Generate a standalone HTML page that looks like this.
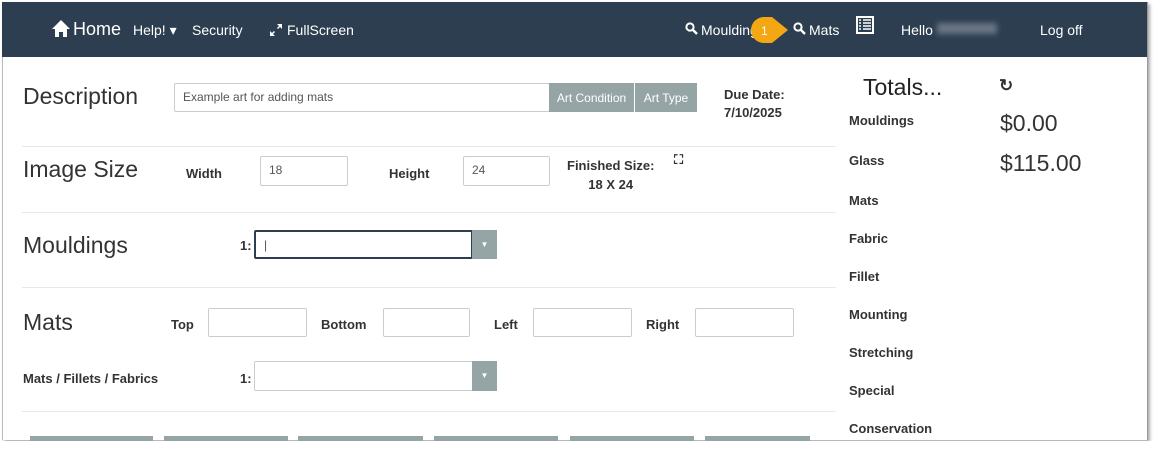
<!DOCTYPE html>
<html><head><style>
body{margin:0;width:1161px;height:457px;background:#fff;font-family:"Liberation Sans",sans-serif;position:relative;overflow:hidden;color:#222}
.a{position:absolute}
.page{left:2px;top:2px;width:1144px;height:438px;background:#fff;border-left:1px solid #bbb;border-right:1px solid #999;box-shadow:2px 2px 3px #aaa;overflow:hidden}
.nav{left:2px;top:2px;width:1145px;height:55px;background:#2c3e50;color:#fff}
.nav span{position:absolute;font-size:14px;top:20px}
h{position:absolute;font-size:23px;color:#333}
.l{position:absolute;font-size:13px;font-weight:bold;color:#333}
.in{position:absolute;border:1px solid #ccc;background:#fff;border-radius:2px;font-size:12px;color:#555;box-sizing:border-box;padding:6px 8px}
.hr{position:absolute;left:22px;width:814px;height:1px;background:#e8e8e8}
.btn{position:absolute;background:#95a5a6;color:#fff;font-size:12px;text-align:center;line-height:30px}
.t{position:absolute;left:849px;font-size:13px;font-weight:bold;color:#333}
</style></head><body>
<div class="a page"></div>
<div class="a nav">
<svg class="a" style="left:49px;top:17px" width="20" height="18" viewBox="0 0 20 18"><path d="M10 1L1 10h3v8h4v-5h4v5h4v-8h3z" fill="#fff"/></svg>
<span style="left:71px;top:17px;font-size:18px">Home</span>
<span style="left:131px">Help! ▾</span>
<span style="left:190px">Security</span>
<svg class="a" style="left:267px;top:21px" width="14" height="14" viewBox="0 0 14 14"><path d="M8 1h5v5l-2-2-2 2-1-1 2-2zM6 13H1V8l2 2 2-2 1 1-2 2z" fill="#fff"/></svg>
<span style="left:285px">FullScreen</span>
<svg class="a" style="left:683px;top:20px" width="13" height="13" viewBox="0 0 13 13"><circle cx="5" cy="5" r="3.6" stroke="#fff" stroke-width="2" fill="none"/><path d="M8 8l4 4" stroke="#fff" stroke-width="2.4"/></svg>
<span style="left:699px">Mouldings</span>
<svg class="a" style="left:791px;top:20px" width="13" height="13" viewBox="0 0 13 13"><circle cx="5" cy="5" r="3.6" stroke="#fff" stroke-width="2" fill="none"/><path d="M8 8l4 4" stroke="#fff" stroke-width="2.4"/></svg>
<span style="left:807px">Mats</span>
<svg class="a" style="left:853px;top:13px" width="20" height="20" viewBox="0 0 20 20"><rect x="1" y="1" width="18" height="18" fill="#fff"/><rect x="3" y="3" width="14" height="14" fill="#2c3e50"/><path d="M4 5h2M8 5h8M4 8h2M8 8h8M4 11h2M8 11h8M4 14h2M8 14h8" stroke="#fff" stroke-width="1.5"/></svg>
<span style="left:899px">Hello</span>
<div class="a" style="left:935px;top:21px;width:60px;height:11px;background:#6a7685;filter:blur(3px)"></div>
<span style="left:1038px">Log off</span>
</div>
<svg class="a" style="left:749px;top:16px" width="40" height="30" viewBox="0 0 40 30"><path d="M15 1h8l16 13-16 13h-8a13 13 0 0 1 0-26z" fill="#f3a712"/><text x="12" y="19" font-size="12" fill="#fff" font-family="Liberation Sans">1</text></svg>

<h style="left:23px;top:83px">Description</h>
<div class="in" style="left:174px;top:83px;width:376px;height:29px">Example art for adding mats</div>
<div class="btn" style="left:549px;top:83px;width:85px;height:29px">Art Condition</div>
<div class="btn" style="left:635px;top:83px;width:62px;height:29px">Art Type</div>
<div class="l" style="left:724px;top:86px;line-height:18px">Due Date:<br>7/10/2025</div>
<div class="hr" style="top:146px"></div>
<h style="left:23px;top:156px">Image Size</h>
<div class="l" style="left:186px;top:166px">Width</div>
<div class="in" style="left:260px;top:156px;width:88px;height:30px">18</div>
<div class="l" style="left:389px;top:166px">Height</div>
<div class="in" style="left:463px;top:156px;width:87px;height:30px">24</div>
<div class="l" style="left:567px;top:156px;text-align:center;line-height:19px">Finished Size:<br>18 X 24</div>
<div class="a" style="left:674px;top:152px;color:#333;font-size:13px;font-weight:bold">⛶</div>
<div class="hr" style="top:212px"></div>
<h style="left:23px;top:232px">Mouldings</h>
<div class="l" style="left:240px;top:238px">1:</div>
<div class="in" style="left:254px;top:230px;width:219px;height:29px;border:2px solid #2c3e50">|</div>
<div class="btn" style="left:472px;top:230px;width:25px;height:29px;font-size:8px">▼</div>
<div class="hr" style="top:287px"></div>
<h style="left:23px;top:309px">Mats</h>
<div class="l" style="left:171px;top:317px">Top</div>
<div class="in" style="left:208px;top:308px;width:99px;height:29px"></div>
<div class="l" style="left:321px;top:317px">Bottom</div>
<div class="in" style="left:383px;top:308px;width:87px;height:29px"></div>
<div class="l" style="left:494px;top:317px">Left</div>
<div class="in" style="left:533px;top:308px;width:99px;height:29px"></div>
<div class="l" style="left:646px;top:317px">Right</div>
<div class="in" style="left:695px;top:308px;width:99px;height:29px"></div>
<div class="l" style="left:23px;top:371px">Mats / Fillets / Fabrics</div>
<div class="l" style="left:240px;top:371px">1:</div>
<div class="in" style="left:254px;top:361px;width:219px;height:30px"></div>
<div class="btn" style="left:472px;top:361px;width:25px;height:30px;font-size:8px">▼</div>
<div class="hr" style="top:411px"></div>
<div class="btn" style="left:30px;top:436px;width:123px;height:5px"></div>
<div class="btn" style="left:164px;top:436px;width:124px;height:5px"></div>
<div class="btn" style="left:298px;top:436px;width:125px;height:5px"></div>
<div class="btn" style="left:434px;top:436px;width:124px;height:5px"></div>
<div class="btn" style="left:570px;top:436px;width:124px;height:5px"></div>
<div class="btn" style="left:705px;top:436px;width:105px;height:5px"></div>

<div class="a" style="left:863px;top:74px;font-size:23px;color:#222">Totals...</div>
<div class="a" style="left:999px;top:76px;font-size:17px;font-weight:bold;color:#333">↻</div>
<div class="t" style="top:113px">Mouldings</div>
<div class="a" style="left:1000px;top:110px;font-size:23px;color:#333">$0.00</div>
<div class="t" style="top:153px">Glass</div>
<div class="a" style="left:1000px;top:150px;font-size:23px;color:#333">$115.00</div>
<div class="t" style="top:193px">Mats</div>
<div class="t" style="top:231px">Fabric</div>
<div class="t" style="top:269px">Fillet</div>
<div class="t" style="top:307px">Mounting</div>
<div class="t" style="top:345px">Stretching</div>
<div class="t" style="top:383px">Special</div>
<div class="t" style="top:421px">Conservation</div>
<div class="a" style="left:0;top:441px;width:1161px;height:16px;background:#fff"></div>
</body></html>
